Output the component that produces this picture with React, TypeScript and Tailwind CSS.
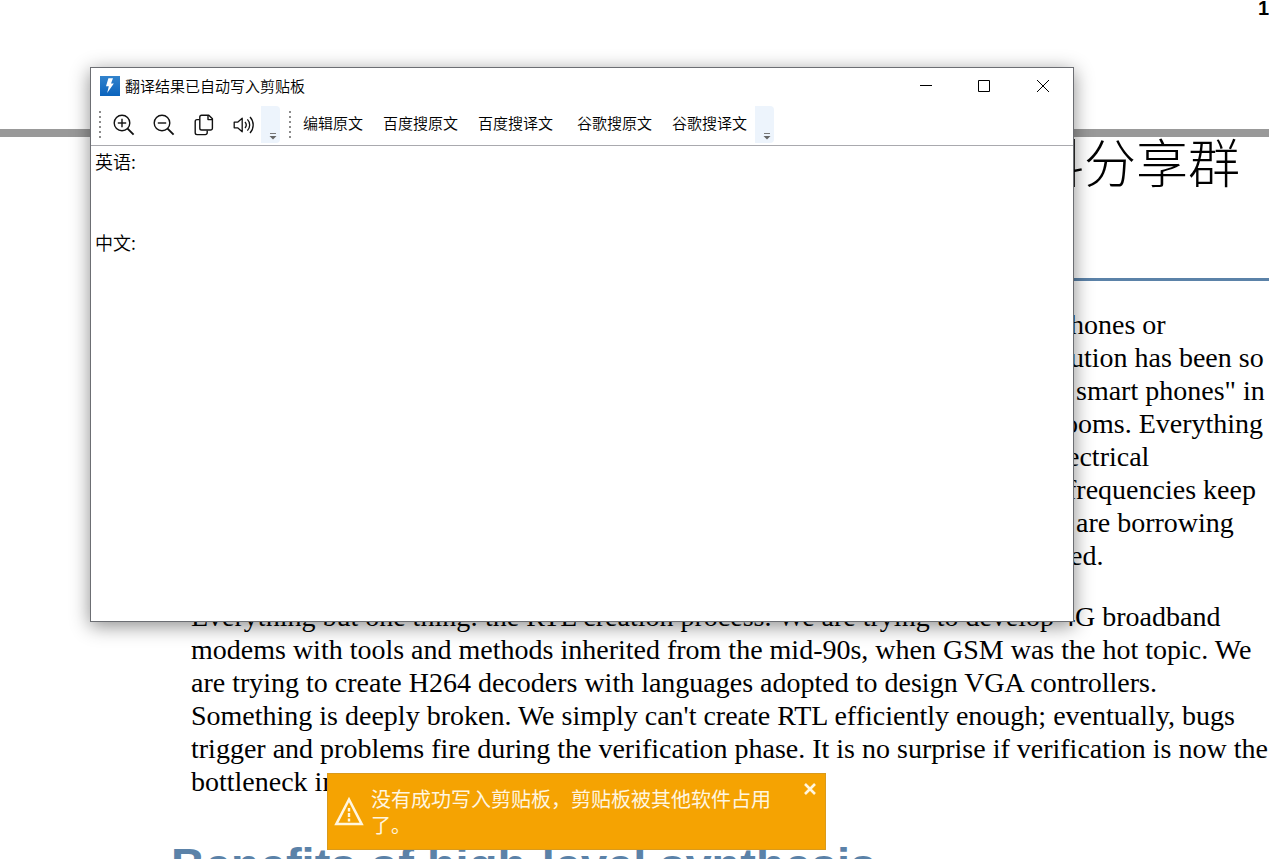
import React from 'react';

const TEXT_ACTION_GROUPS = [
  ['编辑原文', '百度搜原文', '百度搜译文'],
  ['谷歌搜原文', '谷歌搜译文'],
];

const INTRO_LINES = [
  { text: 'hones or', indent: 'pl-[1070px]' },
  { text: 'ution has been so', indent: 'pl-[1070px]' },
  { text: 'smart phones" in', indent: 'pl-[1076px]' },
  { text: 'ooms. Everything', indent: 'pl-[1064px]' },
  { text: 'ectrical', indent: 'pl-[1067px]' },
  { text: 'frequencies keep', indent: 'pl-[1067px]' },
  { text: 'are borrowing', indent: 'pl-[1076px]' },
  { text: 'ed.', indent: 'pl-[1070px]' },
];

const BODY_LINES = [
  'Everything but one thing: the RTL creation process. We are trying to develop 4G broadband',
  'modems with tools and methods inherited from the mid-90s, when GSM was the hot topic. We',
  'are trying to create H264 decoders with languages adopted to design VGA controllers.',
  "Something is deeply broken. We simply can't create RTL efficiently enough; eventually, bugs",
  'trigger and problems fire during the verification phase. It is no surprise if verification is now the',
  'bottleneck in any ASIC project.',
];

const AppLogo: React.FC = () => (
  <svg width="20" height="20" viewBox="0 0 20 20" aria-hidden="true">
    <defs>
      <linearGradient id="logo-blue" x1="0" y1="0" x2="0" y2="1">
        <stop offset="0" stopColor="#3283cc" />
        <stop offset="1" stopColor="#0a63bd" />
      </linearGradient>
    </defs>
    <rect width="20" height="20" fill="url(#logo-blue)" />
    <path d="M8.4 2.2h4.6L11 7.4h2.8L7.2 17l1.6-6.8H6z" fill="#fff" />
  </svg>
);

const ZoomIcon: React.FC<{ plus?: boolean }> = ({ plus }) => (
  <svg width="22" height="22" viewBox="0 0 22 22" fill="none" stroke="#111" strokeWidth="1.4" aria-hidden="true">
    <circle cx="9" cy="9" r="7.8" />
    <path d="M14.6 14.6l6 6" strokeWidth="1.8" />
    <path d="M4.8 9h8.4" />
    {plus && <path d="M9 4.8v8.4" />}
  </svg>
);

const CopyIcon: React.FC = () => (
  <svg width="22" height="22" viewBox="0 0 22 22" fill="none" stroke="#111" strokeWidth="1.4" strokeLinejoin="round" aria-hidden="true">
    <path d="M8.6 1.2h7.2l3.6 3.6v9.4a1.8 1.8 0 0 1-1.8 1.8h-9a1.8 1.8 0 0 1-1.8-1.8V3a1.8 1.8 0 0 1 1.8-1.8z" />
    <path d="M15 1.6v4h4" />
    <path d="M6.6 5.6H4a1.8 1.8 0 0 0-1.8 1.8v11.4A1.8 1.8 0 0 0 4 20.6h8.4a1.8 1.8 0 0 0 1.8-1.8v-2.4" />
  </svg>
);

const SpeakerIcon: React.FC = () => (
  <svg width="22" height="22" viewBox="0 0 22 22" fill="none" stroke="#111" strokeWidth="1.3" strokeLinejoin="round" aria-hidden="true">
    <path d="M1.2 8.2h3.4l4.6-4v13.6l-4.6-4H1.2z" />
    <path d="M12 8a4.6 4.6 0 0 1 0 6" />
    <path d="M14.4 5.4a8 8 0 0 1 0 11.2" />
    <path d="M17 3a11.6 11.6 0 0 1 0 16" />
  </svg>
);

const Grip: React.FC = () => (
  <div className="flex w-[2px] shrink-0 flex-col gap-[3px]">
    {[0, 1, 2, 3, 4, 5].map(dot => (
      <span key={dot} className="h-[2px] w-[2px] bg-[#8c8c8c]" />
    ))}
  </div>
);

const OverflowButton: React.FC = () => (
  <button type="button" aria-label="More" className="flex h-[37px] w-[19px] shrink-0 items-end justify-center rounded-r bg-[#edf4fc] pb-[3px] pl-1">
    <svg width="8" height="8" viewBox="0 0 8 8" aria-hidden="true">
      <path d="M1 1.5h6" stroke="#777" />
      <path d="M0.5 4h7L4 7.5z" fill="#666" />
    </svg>
  </button>
);

const TranslateWindow: React.FC = () => (
  <section className="absolute top-[67px] right-[195px] left-[90px] flex h-[555px] flex-col border border-[#6c6e73] bg-white font-['Noto_Sans_CJK_SC',sans-serif] font-[350] text-black shadow-[0_4px_18px_rgba(0,0,0,0.45)]">
    {/* Title bar */}
    <header className="flex h-9 shrink-0 items-center pl-[9px]">
      <AppLogo />
      <h1 className="ml-[5px] flex-1 text-[15px] leading-5 font-[350]">翻译结果已自动写入剪贴板</h1>
      <button type="button" aria-label="Minimize" className="flex h-9 w-[58px] items-center justify-center">
        <svg width="12" height="12" viewBox="0 0 12 12"><path d="M0 5.5h12" stroke="#000" /></svg>
      </button>
      <button type="button" aria-label="Maximize" className="flex h-9 w-[58px] items-center justify-center">
        <svg width="12" height="12" viewBox="0 0 12 12"><path d="M.5.5h11v11H.5z" fill="none" stroke="#000" /></svg>
      </button>
      <button type="button" aria-label="Close" className="flex h-9 w-[60px] items-center justify-center">
        <svg width="12" height="12" viewBox="0 0 12 12"><path d="M0 0l12 12M12 0L0 12" stroke="#000" /></svg>
      </button>
    </header>

    {/* Toolbars */}
    <div className="flex h-[41px] shrink-0 items-center pl-2">
      <Grip />
      <div className="ml-3 flex gap-[18px]">
        <button type="button" aria-label="Zoom in"><ZoomIcon plus /></button>
        <button type="button" aria-label="Zoom out"><ZoomIcon /></button>
        <button type="button" aria-label="Copy"><CopyIcon /></button>
        <button type="button" aria-label="Read aloud"><SpeakerIcon /></button>
      </div>
      <div className="ml-[6px]"><OverflowButton /></div>
      <div className="ml-[9px]"><Grip /></div>
      <div className="ml-3 flex gap-6 pb-[3px] text-[15px] leading-5 whitespace-nowrap">
        {TEXT_ACTION_GROUPS.map(group => (
          <div key={group[0]} className="flex gap-5">
            {group.map(action => (
              <button key={action} type="button">{action}</button>
            ))}
          </div>
        ))}
      </div>
      <div className="ml-2"><OverflowButton /></div>
    </div>

    <textarea
      aria-label="Translation"
      defaultValue={'英语:\n\n\n中文:'}
      className="w-full flex-1 resize-none border-t border-[#a9a9ae] px-1 py-[2px] text-[18px] leading-[27px] outline-none"
    />
  </section>
);

const Toast: React.FC = () => (
  <div role="alert" className="absolute top-[773px] left-[327px] flex h-[77px] w-[499px] items-start border border-[#d99a1c] bg-[#f5a302] font-['Noto_Sans_CJK_SC',sans-serif] text-[#fff6e0]">
    <svg className="mt-[22px] ml-[6px] shrink-0" width="30" height="31" viewBox="0 0 30 31" aria-hidden="true">
      <path d="M15 3.5L27.6 28H2.4z" fill="none" stroke="#fff6e0" strokeWidth="2.6" />
      <path d="M15 12v3.4M15 17v4M15 22.6v2.8" stroke="#fff6e0" strokeWidth="2.4" />
    </svg>
    <p className="mt-3 ml-[7px] w-[404px] text-[20px] leading-[26px]">没有成功写入剪贴板，剪贴板被其他软件占用了。</p>
    <button type="button" aria-label="Close" className="mt-[9px] ml-7">
      <svg width="14" height="12" viewBox="0 0 14 12"><path d="M2 1l10 10M12 1L2 11" stroke="#fff6e0" strokeWidth="2.6" /></svg>
    </button>
  </div>
);

const App: React.FC = () => (
  <main className="relative h-screen overflow-hidden bg-white font-['Liberation_Serif',serif] text-black">
    {/* Document page */}
    <div className="flex h-[129px] justify-end font-['Liberation_Sans',sans-serif] text-[20px] leading-4 font-bold">
      <span>1</span>
    </div>
    <div className="h-2 bg-[#999999]" />
    <p className="h-[141px] pl-[1032px] font-['Noto_Sans_CJK_SC',sans-serif] text-[52px] leading-[48px] font-light whitespace-nowrap">料分享群</p>
    <div className="ml-[190px] h-[3px] bg-[#5b82a8]" />

    <div className="pt-[27px] text-[28px] leading-[33px] whitespace-nowrap">
      {INTRO_LINES.map(line => (
        <p key={line.text} className={line.indent}>{line.text}</p>
      ))}
    </div>
    <div className="pt-7 pl-[191px] text-[28px] leading-[33px] whitespace-nowrap">
      {BODY_LINES.map(line => (
        <p key={line}>{line}</p>
      ))}
    </div>
    <h2 className="mt-[39px] pl-[171px] font-['Liberation_Sans',sans-serif] text-[47px] leading-[56px] font-bold whitespace-nowrap text-[#5b82a8]">
      Benefits of high-level synthesis
    </h2>

    <TranslateWindow />
    <Toast />
  </main>
);

export default App;
